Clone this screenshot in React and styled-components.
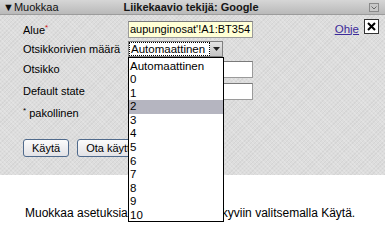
import React from "react";
import styled, { createGlobalStyle } from "styled-components";

const GlobalStyle = createGlobalStyle`
  html, body { margin: 0; padding: 0; background: #ffffff; }
  body { font-family: "Liberation Sans", Arial, sans-serif; color: #000; }
`;

const Window = styled.div`
  width: 385px;
  height: 229px;
  overflow: hidden;
  background: #ffffff;
  display: flex;
  flex-direction: column;
`;

const TitleBar = styled.div`
  height: 15px;
  flex: 0 0 15px;
  box-sizing: border-box;
  display: grid;
  grid-template-columns: 1fr auto 1fr;
  align-items: center;
  padding: 0 6px 0 3px;
  font-size: 11px;
  line-height: 14px;
  background: linear-gradient(#d6d6d6, #b9b9b9);
  border-bottom: 1px solid #9c9c9c;
`;

const Collapse = styled.span`
  color: #111;
  white-space: nowrap;
`;

const Title = styled.span`
  font-weight: bold;
  color: #151515;
  white-space: nowrap;
`;

const MinBox = styled.span`
  justify-self: end;
  display: flex;
  align-items: center;
`;

const Panel = styled.div`
  height: 160px;
  flex: 0 0 160px;
  box-sizing: border-box;
  padding: 5px 6px 0 23px;
  background-color: #dddddd;
  background-image: repeating-linear-gradient(45deg, rgba(255,255,255,0.18) 0 1px, transparent 1px 3px),
    repeating-linear-gradient(-45deg, rgba(0,0,0,0.04) 0 1px, transparent 1px 3px);
  display: flex;
  flex-direction: column;
`;

const Row = styled.div`
  display: grid;
  grid-template-columns: 105px 1fr;
  align-items: center;
  height: ${(p) => p.$h}px;
  font-size: 11px;
`;

const Label = styled.span`
  white-space: nowrap;
`;

const Req = styled.sup`
  color: ${(p) => (p.$dark ? "#000" : "#d01010")};
  font-size: 8px;
  vertical-align: top;
  line-height: 8px;
`;

const Field = styled.div`
  display: flex;
  align-items: center;
  position: relative;
`;

const TextBox = styled.div`
  width: 125px;
  height: 17px;
  box-sizing: border-box;
  border: 1px solid #9a9a9a;
  border-top-color: #7a7a7a;
  background: ${(p) => (p.$yellow ? "#ffffd6" : "#ffffff")};
  font-size: 11px;
  line-height: 15px;
  padding-left: 1px;
  white-space: nowrap;
  overflow: hidden;
`;

const Help = styled.a`
  margin-left: auto;
  color: #3d2b9a;
  text-decoration: underline;
  font-size: 11.5px;
  margin-right: 5px;
  margin-top: -2px;
`;

const CloseBox = styled.span`
  width: 15px;
  height: 15px;
  box-sizing: border-box;
  border: 1px solid #333;
  background: #fff;
  display: flex;
  align-items: center;
  justify-content: center;
  margin-top: -6px;
`;

const Select = styled.div`
  width: 95px;
  height: 16px;
  box-sizing: border-box;
  border: 1px solid #7f7f7f;
  background: #fff;
  display: flex;
  align-items: center;
  font-size: 11.5px;
`;

const SelectValue = styled.span`
  flex: 1;
  margin: 1px;
  height: 12px;
  line-height: 12px;
  outline: 1px dotted #000;
  padding-left: 1px;
  white-space: nowrap;
  overflow: hidden;
`;

const SelectArrow = styled.span`
  width: 12px;
  height: 14px;
  background: linear-gradient(#e4e4e4, #c4c4c4);
  display: flex;
  align-items: center;
  justify-content: center;
`;

const List = styled.ul`
  position: absolute;
  left: 0;
  top: 16px;
  width: 96px;
  height: 165px;
  box-sizing: border-box;
  margin: 0;
  padding: 2px 0 0 0;
  list-style: none;
  background: #fff;
  border: 1px solid #000;
  z-index: 5;
  font-size: 11.5px;
`;

const Option = styled.li`
  height: 13.6px;
  line-height: 13.6px;
  padding-left: 1px;
  background: ${(p) => (p.$active ? "#b5b5c0" : "transparent")};
  white-space: nowrap;
`;

const ButtonRow = styled.div`
  display: flex;
  gap: 8px;
  margin-top: 15px;
`;

const Button = styled.button`
  height: 18px;
  box-sizing: border-box;
  padding: 0 ${(p) => p.$pad}px;
  border: 1px solid #4f6a8c;
  border-radius: 3px;
  background: linear-gradient(#fbfbfb, #e2e2e6);
  font-family: "Liberation Sans", Arial, sans-serif;
  font-size: 11px;
  color: #000;
  white-space: nowrap;
`;

const Footer = styled.div`
  flex: 1;
  padding: 31px 0 0 25px;
  font-size: 12px;
  white-space: nowrap;
`;

const options = ["Automaattinen", "0", "1", "2", "3", "4", "5", "6", "7", "8", "9", "10"];

export default function App() {
  return (
    <>
      <GlobalStyle />
      <Window>
        <TitleBar>
          <Collapse>▼Muokkaa</Collapse>
          <Title>Liikekaavio tekijä: Google</Title>
          <MinBox>
            <svg width="10" height="9" viewBox="0 0 10 9">
              <rect x="0.5" y="0.5" width="9" height="8" fill="#c8c8c8" stroke="#8a8a8a" />
              <path d="M2.5 3.5 L5 6 L7.5 3.5" fill="none" stroke="#666" strokeWidth="1" />
            </svg>
          </MinBox>
        </TitleBar>
        <Panel>
          <Row $h={19}>
            <Label>
              Alue<Req>*</Req>
            </Label>
            <Field>
              <TextBox $yellow>aupunginosat'!A1:BT354</TextBox>
              <Help href="#">Ohje</Help>
              <CloseBox>
                <svg width="9" height="9" viewBox="0 0 9 9">
                  <path d="M1 1 L8 8 M8 1 L1 8" stroke="#000" strokeWidth="2" />
                </svg>
              </CloseBox>
            </Field>
          </Row>
          <Row $h={19}>
            <Label>Otsikkorivien määrä</Label>
            <Field>
              <Select>
                <SelectValue>Automaattinen</SelectValue>
                <SelectArrow>
                  <svg width="7" height="4" viewBox="0 0 7 4">
                    <path d="M0 0 H7 L3.5 4 Z" fill="#222" />
                  </svg>
                </SelectArrow>
              </Select>
              <List>
                {options.map((o) => (
                  <Option key={o} $active={o === "2"}>
                    {o}
                  </Option>
                ))}
              </List>
            </Field>
          </Row>
          <Row $h={22}>
            <Label>Otsikko</Label>
            <Field>
              <TextBox />
            </Field>
          </Row>
          <Row $h={22}>
            <Label>Default state</Label>
            <Field>
              <TextBox />
            </Field>
          </Row>
          <Row $h={22}>
            <Label>
              <Req $dark>*</Req> pakollinen
            </Label>
          </Row>
          <ButtonRow>
            <Button $pad={8}>Käytä</Button>
            <Button $pad={8}>Ota käyttöön</Button>
          </ButtonRow>
        </Panel>
        <Footer>Muokkaa asetuksia ja tuo kaavion näkyviin valitsemalla Käytä.</Footer>
      </Window>
    </>
  );
}
